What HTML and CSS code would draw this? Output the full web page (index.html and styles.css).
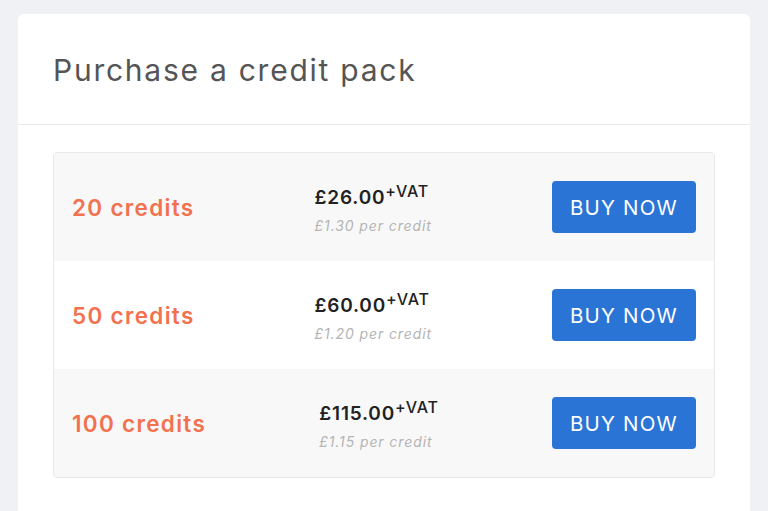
FILE: index.html
```html
<!DOCTYPE html>
<html>
<head>
<meta charset="utf-8">
<link rel="stylesheet" href="styles.css">
</head>
<body>
<div class="card">
  <div class="card-header">
    <h1 class="title">Purchase a credit pack</h1>
  </div>
  <div class="card-body">
    <div class="packs">
      <div class="pack">
        <div class="credits">20 credits</div>
        <div class="price-block">
          <div class="price">£26.00<sup class="vat">+VAT</sup></div>
          <div class="per">£1.30 per credit</div>
        </div>
        <button class="buy">BUY NOW</button>
      </div>
      <div class="pack alt">
        <div class="credits">50 credits</div>
        <div class="price-block">
          <div class="price">£60.00<sup class="vat">+VAT</sup></div>
          <div class="per">£1.20 per credit</div>
        </div>
        <button class="buy">BUY NOW</button>
      </div>
      <div class="pack">
        <div class="credits">100 credits</div>
        <div class="price-block">
          <div class="price">£115.00<sup class="vat">+VAT</sup></div>
          <div class="per">£1.15 per credit</div>
        </div>
        <button class="buy">BUY NOW</button>
      </div>
    </div>
  </div>
</div>
</body>
</html>
```
FILE: styles.css
```css
html, body {
  margin: 0;
  padding: 0;
  background: #f0f1f4;
  font-family: "Inter", "DejaVu Sans", sans-serif;
}
body {
  padding: 14px 18px 0;
  height: 511px;
  box-sizing: border-box;
  overflow: hidden;
}
.card {
  background: #fff;
  border-radius: 6px 6px 0 0;
  height: 100%;
}
.card-header {
  height: 110px;
  border-bottom: 1px solid #e9eaec;
  display: flex;
  align-items: center;
  padding: 0 35px;
}
.title {
  margin: 0;
  font-size: 30px;
  font-weight: 400;
  letter-spacing: 1.75px;
  color: #555;
  padding-top: 2px;
}
.card-body {
  padding: 27px 35px 0;
}
.packs {
  border: 1px solid #e8e8e8;
  border-radius: 4px;
  overflow: hidden;
}
.pack {
  display: flex;
  justify-content: space-between;
  align-items: center;
  height: 108px;
  padding: 0 18px;
  background: #f8f8f8;
}
.pack.alt {
  background: #fff;
}
.credits {
  color: #f2714f;
  font-size: 22.5px;
  font-weight: 600;
  letter-spacing: 1.3px;
}
.price-block {
  display: flex;
  flex-direction: column;
  padding-top: 5px;
}
.price {
  color: #222;
  font-size: 19px;
  font-weight: 600;
  letter-spacing: 0.8px;
}
.vat {
  font-size: 16px;
  font-weight: 500;
  vertical-align: 7px;
  line-height: 0;
  letter-spacing: 0.8px;
}
.per {
  color: #b4b4b4;
  font-size: 14px;
  font-style: italic;
  letter-spacing: 0.9px;
  margin-top: 8px;
}
.buy {
  width: 144px;
  height: 52px;
  background: #2a74d6;
  color: #fff;
  border: none;
  border-radius: 4px;
  font-family: inherit;
  font-size: 20.5px;
  font-weight: 400;
  letter-spacing: 1.2px;
}
```
